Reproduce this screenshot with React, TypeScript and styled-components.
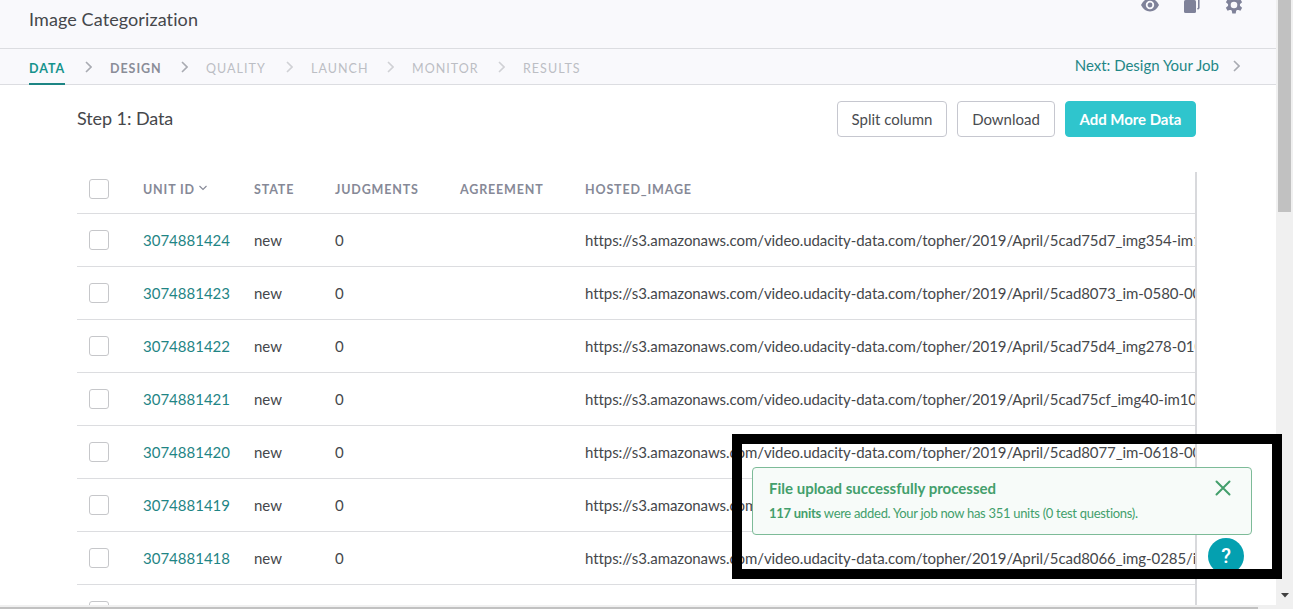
import React from "react";
import styled, { createGlobalStyle } from "styled-components";

const Global = createGlobalStyle`
  * { box-sizing: border-box; }
  body { margin: 0; background: #fff; font-family: Lato, "Liberation Sans", sans-serif; color: #45474b; }
`;

const Window = styled.div`
  position: relative;
  display: grid;
  grid-template-columns: minmax(0, 1fr) 17px;
  grid-template-rows: minmax(0, 1fr) 4px;
  width: 1293px;
  height: 609px;
  overflow: hidden;
`;

const Page = styled.main`
  display: flex;
  flex-direction: column;
  min-width: 0;
  overflow: hidden;
`;

const Header = styled.header`
  display: flex;
  flex: none;
  justify-content: space-between;
  height: 49px;
  padding: 0 33px 0 29px;
  background: #f9f9fc;
  border-bottom: 1px solid #dcdde1;
`;

const Title = styled.h1`
  margin: 7px 0 0;
  font-size: 18px;
  line-height: 24px;
  font-weight: 400;
  letter-spacing: 0.1px;
`;

const HeaderIcons = styled.div`
  display: flex;
  gap: 24px;
  height: 18px;
  margin-top: -4px;
  color: #7f8299;
`;

const Steps = styled.nav`
  display: flex;
  flex: none;
  height: 36px;
  padding: 0 34px 0 29px;
  background: #f9f9fc;
  border-bottom: 1px solid #dcdde1;
`;

type Tone = "active" | "ready" | "idle";
const toneColor: Record<Tone, string> = { active: "#15938c", ready: "#8a8d98", idle: "#bcbec4" };

const Step = styled.span<{ $tone: Tone; $width: number }>`
  flex: none;
  width: ${(p) => p.$width}px;
  height: 36px;
  font-size: 12.5px;
  line-height: 39px;
  letter-spacing: ${(p) => (p.$tone === "idle" ? 1.03 : 0.95)}px;
  white-space: nowrap;
  font-weight: ${(p) => (p.$tone === "idle" ? 400 : 700)};
  color: ${(p) => toneColor[p.$tone]};
  border-bottom: ${(p) => (p.$tone === "active" ? "2px solid #1d8584" : "0")};
`;

const StepArrow = styled.svg<{ $faint?: boolean }>`
  flex: none;
  width: 7px;
  height: 12px;
  margin: 12px 18px 0 20px;
  color: ${(p) => (p.$faint ? "#d0d1d5" : "#a9abb2")};
`;

const NextLink = styled.a`
  display: flex;
  margin-left: auto;
  font-size: 15px;
  line-height: 33px;
  color: #1f8787;
  svg { width: 7px; height: 12px; margin: 11px 2px 0 14px; color: #a9abb2; }
`;

const Content = styled.section`
  display: flex;
  flex: 1;
  flex-direction: column;
  min-height: 0;
  padding: 16px 79px 0 77px;
`;

const Toolbar = styled.div`
  display: flex;
  flex: none;
  gap: 10px;
  height: 36px;
  margin-right: 1px;
`;

const StepTitle = styled.h2`
  flex: 1;
  margin: 0;
  font-size: 18px;
  line-height: 34px;
  font-weight: 400;
  letter-spacing: -0.08px;
`;

const Button = styled.button<{ $primary?: boolean; $width: number }>`
  width: ${(p) => p.$width}px;
  padding: 0 0 1px;
  font: ${(p) => (p.$primary ? 700 : 400)} 15px Lato, "Liberation Sans", sans-serif;
  letter-spacing: ${(p) => (p.$primary ? "-0.05px" : "0")};
  white-space: nowrap;
  color: ${(p) => (p.$primary ? "#fff" : "#4a4c50")};
  background: ${(p) => (p.$primary ? "#2fc5cd" : "#fff")};
  border: 1px solid ${(p) => (p.$primary ? "#2fc5cd" : "#c6c7cf")};
  border-radius: 4px;
`;

const TableFrame = styled.div`
  flex: 1;
  min-height: 0;
  margin-top: 35px;
  overflow: hidden;
  border-right: 2px solid #d8d9dc;
`;

const Row = styled.div<{ $head?: boolean }>`
  display: grid;
  grid-template-columns: 66px 111px 81px 125px 125px 610px;
  align-items: center;
  height: ${(p) => (p.$head ? 42 : 53)}px;
  padding-bottom: ${(p) => (p.$head ? 8 : 0)}px;
  border-bottom: 1px solid #dcdde0;
  overflow: hidden;
`;

const HeadCell = styled.span`
  display: flex;
  align-items: center;
  gap: 4px;
  padding-top: 1px;
  font-size: 12.5px;
  font-weight: 700;
  letter-spacing: 0.84px;
  white-space: nowrap;
  color: #868997;
  svg { width: 8px; height: 6px; margin-top: -3px; }
`;

const Cell = styled.span<{ $link?: boolean }>`
  font-size: 15px;
  line-height: 20px;
  padding-bottom: 1px;
  white-space: nowrap;
  color: ${(p) => (p.$link ? "#1f8585" : "#45474b")};
`;

const UrlCell = styled(Cell)`
  letter-spacing: -0.07px;
`;

const Check = styled.span`
  width: 20px;
  height: 20px;
  margin-left: 12px;
  background: #fff;
  border: 1px solid #c6c7ca;
  border-radius: 3px;
`;

const VerticalBar = styled.div`
  display: flex;
  flex-direction: column;
  justify-content: space-between;
  align-items: center;
  background: #f0f0f0;
  padding: 0 2px 7px;
`;

const VerticalThumb = styled.div`
  width: 13px;
  height: 212px;
  background: #c1c1c1;
`;

const HorizontalBar = styled.div`
  grid-column: 1 / -1;
  padding-top: 2px;
  background: #f0f0f0;
`;

const HorizontalThumb = styled.div`
  width: 1258px;
  height: 2px;
  background: #c1c1c1;
`;

const Highlight = styled.div`
  position: absolute;
  z-index: 3;
  left: 732px;
  top: 434px;
  width: 550px;
  height: 145px;
  border: 10px solid #000;
`;

const Toast = styled.aside`
  position: absolute;
  z-index: 1;
  left: 752px;
  top: 467px;
  display: flex;
  justify-content: space-between;
  width: 500px;
  height: 68px;
  padding: 9px 20px 0 16px;
  color: #439f6c;
  background: #f7fbf9;
  border: 1px solid #7dbb98;
  border-radius: 4px;
  svg { width: 16px; height: 16px; margin-top: 3px; }
`;

const ToastTitle = styled.div`
  font-size: 15px;
  line-height: 22px;
  font-weight: 700;
  white-space: nowrap;
`;

const ToastText = styled.div`
  margin-top: 4px;
  font-size: 13px;
  line-height: 20px;
  letter-spacing: -0.3px;
  white-space: nowrap;
  b { letter-spacing: -0.25px; }
`;

const HelpButton = styled.div`
  position: absolute;
  z-index: 2;
  left: 1208px;
  top: 538px;
  width: 36px;
  height: 36px;
  border-radius: 50%;
  background: #04a0b0;
  color: #fff;
  font-family: Roboto, "Liberation Sans", sans-serif;
  font-size: 20px;
  line-height: 36px;
  font-weight: 500;
  text-align: center;
`;

const Chevron = () => <path d="M1 1l5 5-5 5" fill="none" stroke="currentColor" strokeWidth="1.6" />;

const steps: { name: string; tone: Tone; width: number }[] = [
  { name: "DATA", tone: "active", width: 36 },
  { name: "DESIGN", tone: "ready", width: 51 },
  { name: "QUALITY", tone: "idle", width: 60 },
  { name: "LAUNCH", tone: "idle", width: 56 },
  { name: "MONITOR", tone: "idle", width: 66 },
  { name: "RESULTS", tone: "idle", width: 58 },
];

const base = "https://s3.amazonaws.com/video.udacity-data.com/topher/2019/April/";
const rows = [
  ["3074881424", "5cad75d7_img354-im10"],
  ["3074881423", "5cad8073_im-0580-000"],
  ["3074881422", "5cad75d4_img278-010"],
  ["3074881421", "5cad75cf_img40-im10"],
  ["3074881420", "5cad8077_im-0618-000"],
  ["3074881419", "5cad8070_im-0559-000"],
  ["3074881418", "5cad8066_img-0285/i"],
];

export default function App() {
  return (
    <>
      <Global />
      <Window>
        <Page>
          <Header>
            <Title>Image Categorization</Title>
            <HeaderIcons>
              <svg width="18" height="18" viewBox="0 0 18 18">
                <path d="M0 9Q3.2 2.5 9 2.5t9 6.5q-3.2 6.5-9 6.5T0 9Z" fill="currentColor" />
                <circle cx="9" cy="9" r="3.3" fill="none" stroke="#f9f9fc" strokeWidth="1.8" />
              </svg>
              <svg width="18" height="18" viewBox="0 0 18 18">
                <rect x="1" y="4" width="12" height="13" rx="1.5" fill="currentColor" />
                <path d="M5 1h9.5a1.3 1.3 0 0 1 1.3 1.5V12l-1.3 1.3" fill="none" stroke="currentColor" strokeWidth="1.6" />
              </svg>
              <svg width="18" height="18" viewBox="0 0 18 18">
                <g fill="currentColor">
                  {[0, 60, 120].map((a) => (
                    <path key={a} d="M7.3 .6h3.4l.7 4v8.8l-.7 4H7.3l-.7-4V4.6Z" transform={`rotate(${a} 9 9)`} />
                  ))}
                  <circle cx="9" cy="9" r="6" />
                </g>
                <circle cx="9" cy="9" r="3.3" fill="#f9f9fc" />
              </svg>
            </HeaderIcons>
          </Header>
          <Steps>
            {steps.map((s, i) => (
              <React.Fragment key={s.name}>
                {i > 0 && (
                  <StepArrow viewBox="0 0 7 12" $faint={i > 2}>
                    <Chevron />
                  </StepArrow>
                )}
                <Step $tone={s.tone} $width={s.width}>{s.name}</Step>
              </React.Fragment>
            ))}
            <NextLink>
              Next: Design Your Job
              <svg viewBox="0 0 7 12"><Chevron /></svg>
            </NextLink>
          </Steps>
          <Content>
            <Toolbar>
              <StepTitle>Step 1: Data</StepTitle>
              <Button $width={110}>Split column</Button>
              <Button $width={98}>Download</Button>
              <Button $width={131} $primary>Add More Data</Button>
            </Toolbar>
            <TableFrame>
              <Row $head>
                <Check />
                <HeadCell>
                  UNIT ID
                  <svg viewBox="0 0 8 6"><path d="M.5 1L4 4.5 7.5 1" fill="none" stroke="currentColor" strokeWidth="1.1" /></svg>
                </HeadCell>
                <HeadCell>STATE</HeadCell>
                <HeadCell>JUDGMENTS</HeadCell>
                <HeadCell>AGREEMENT</HeadCell>
                <HeadCell>HOSTED_IMAGE</HeadCell>
              </Row>
              {rows.map(([id, file]) => (
                <Row key={id}>
                  <Check />
                  <Cell $link>{id}</Cell>
                  <Cell>new</Cell>
                  <Cell>0</Cell>
                  <Cell />
                  <UrlCell>{base + file}</UrlCell>
                </Row>
              ))}
              <Row><Check /></Row>
            </TableFrame>
          </Content>
        </Page>
        <VerticalBar>
          <VerticalThumb />
          <svg width="8" height="5" viewBox="0 0 8 5"><path d="M0 0h8L4 4.5Z" fill="#404040" /></svg>
        </VerticalBar>
        <HorizontalBar><HorizontalThumb /></HorizontalBar>
        <Toast>
          <div>
            <ToastTitle>File upload successfully processed</ToastTitle>
            <ToastText><b>117 units</b> were added. Your job now has 351 units (0 test questions).</ToastText>
          </div>
          <svg viewBox="0 0 16 16"><path d="M1.5 1.5l13 13M14.5 1.5l-13 13" stroke="currentColor" strokeWidth="2" strokeLinecap="round" /></svg>
        </Toast>
        <HelpButton>?</HelpButton>
        <Highlight />
      </Window>
    </>
  );
}
